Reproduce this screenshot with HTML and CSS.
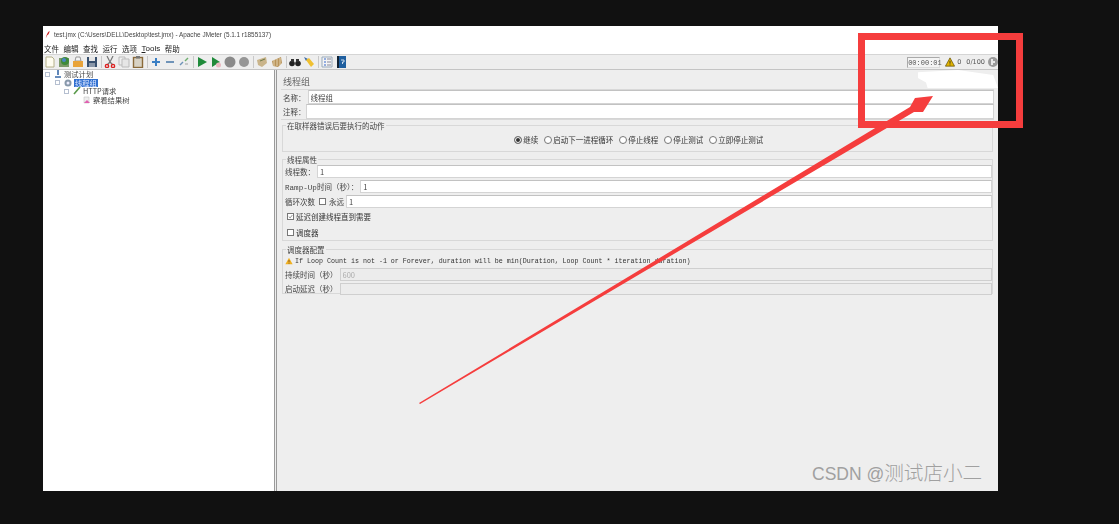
FILE: index.html
```html
<!DOCTYPE html>
<html lang="en">
<head>
    <meta charset="UTF-8">
    <title>test.jmx - Apache JMeter</title>
    <link rel="stylesheet" href="styles.css">
</head>
<body>
    <div class="window">
        <div class="titlebar">
            <svg class="feather" viewBox="0 0 8 10"><path d="M6 0 C3 2 2 6 1 10 L3 6 C5 5 6 3 6 0Z" fill="#c22"/></svg>
            <span>test.jmx (C:\Users\DELL\Desktop\test.jmx) - Apache JMeter (5.1.1 r1855137)</span>
        </div>
        <div class="menubar">
            <span>文件</span><span>编辑</span><span>查找</span><span>运行</span><span>选项</span><span class="latin"><u>T</u>ools</span><span>帮助</span>
        </div>
        <div class="toolbar">
            <svg class="tool" viewBox="0 0 12 12"><path d="M2 1h6l2 2v8H2z" fill="#fffdf0" stroke="#b5b08a"/></svg>
            <svg class="tool" viewBox="0 0 12 12"><rect x="1" y="2" width="10" height="9" fill="#7d9a6a"/><circle cx="7" cy="5" r="4" fill="#3f8a3a"/><circle cx="6" cy="4" r="2" fill="#4a86c5"/></svg>
            <svg class="tool" viewBox="0 0 12 12"><path d="M4 1l4 0 1 4H3z" fill="#f3f3f3" stroke="#999"/><path d="M1 5h10v6H1z" fill="#e8a33a"/></svg>
            <svg class="tool" viewBox="0 0 12 12"><path d="M1 1h10v10H1z" fill="#38506e"/><path d="M3 1h6v4H3z" fill="#e6e6e6"/><path d="M3 7h6v4H3z" fill="#8a97a8"/></svg>
            <i class="sep"></i>
            <svg class="tool" viewBox="0 0 12 12"><path d="M3 0l3 6 3-6M6 6L3 9M6 6l3 3" fill="none" stroke="#777" stroke-width="1.2"/><circle cx="3" cy="10" r="1.6" fill="none" stroke="#d22" stroke-width="1.4"/><circle cx="9" cy="10" r="1.6" fill="none" stroke="#d22" stroke-width="1.4"/></svg>
            <svg class="tool" viewBox="0 0 12 12"><path d="M1 1h6v8H1z" fill="#eee" stroke="#bbb"/><path d="M4 3h7v8H4z" fill="#e6e6e6" stroke="#bbb"/></svg>
            <svg class="tool" viewBox="0 0 12 12"><rect x="1.5" y="1.5" width="9" height="10" fill="#d8d2c4" stroke="#8a6a3a" stroke-width="1.4"/><rect x="4" y="0" width="4" height="2.5" fill="#777"/></svg>
            <i class="sep"></i>
            <svg class="tool" viewBox="0 0 12 12"><path d="M5 2h2v3h3v2H7v3H5V7H2V5h3z" fill="#3b7fc4"/></svg>
            <svg class="tool" viewBox="0 0 12 12"><path d="M2 5h8v2H2z" fill="#6f93b8"/></svg>
            <svg class="tool" viewBox="0 0 12 12"><path d="M2 9l3-3" stroke="#6f93b8" stroke-width="1.5"/><path d="M7 5l3-3" stroke="#6fae6f" stroke-width="1.5"/><path d="M7 8h3" stroke="#bbb" stroke-width="1.5"/></svg>
            <i class="sep"></i>
            <svg class="tool" viewBox="0 0 12 12"><path d="M2 1l9 5-9 5z" fill="#1f8a3a"/></svg>
            <svg class="tool" viewBox="0 0 12 12"><path d="M2 1l8 5-8 5z" fill="#1f8a3a"/><circle cx="8.500" cy="9" r="2.500" fill="#e8b8c0"/></svg>
            <svg class="tool" viewBox="0 0 12 12"><circle cx="6" cy="6" r="5.500" fill="#8a8a8a"/></svg>
            <svg class="tool" viewBox="0 0 12 12"><circle cx="6" cy="6" r="5" fill="#969696"/></svg>
            <i class="sep"></i>
            <svg class="tool" viewBox="0 0 12 12"><path d="M1 4l9-3 1 6-5 4-4-2z" fill="#c9b48a"/><path d="M4 5l5-2" stroke="#6f7a4a"/></svg>
            <svg class="tool wide" viewBox="0 0 12 12"><path d="M1 5l9-4 1 6-4 4-5-1z" fill="#b8935a"/><path d="M3 4v6M6 3v7M9 2v7" stroke="#e4d3b0"/></svg>
            <i class="sep"></i>
            <svg class="tool" viewBox="0 0 12 12"><circle cx="3" cy="7.500" r="2.800" fill="#222"/><circle cx="9" cy="7.500" r="2.800" fill="#222"/><path d="M2 3h3v3H2zM7 3h3v3H7z" fill="#333"/></svg>
            <svg class="tool" viewBox="0 0 12 12"><path d="M1 1l4 2-2 2z" fill="#3a6aa8"/><path d="M3 4l3-2 5 6-3 3z" fill="#f0c030"/></svg>
            <i class="sep"></i>
            <svg class="tool" viewBox="0 0 12 12"><path d="M1 1h10v10H1z" fill="#f4f4f4" stroke="#9ab"/><path d="M3 3h2M3 6h2M3 9h2" stroke="#36c"/><path d="M6 3h4M6 6h4M6 9h4" stroke="#889"/></svg>
            <svg class="tool" viewBox="0 0 12 12"><path d="M2 0h9v12H2z" fill="#1f5f9f"/><path d="M2 0h2v12H2z" fill="#123"/><path d="M6 4h3v2H7.500v2" stroke="#cde" fill="none"/></svg>
            <div class="status">
                <span class="timer">00:00:01</span>
                <svg class="warn-big" viewBox="0 0 12 11"><path d="M6 .5L11.500 10.500H.5z" fill="#e2b400" stroke="#554400" stroke-width=".8"/><path d="M6 4v3.500M6 8.500v1" stroke="#222"/></svg>
                <span>0</span>
                <span class="threads">0/100</span>
                <svg class="globe" viewBox="0 0 10 10"><circle cx="5" cy="5" r="5" fill="#9a9a9a"/><path d="M3 2h2v2h2v2H5v2H3z" fill="#e8e8e8"/></svg>
            </div>
        </div>
        <div class="main">
            <div class="tree">
                <div class="node lvl0"><i class="handle"></i><svg class="node-icon" viewBox="0 0 8 8"><path d="M4 0v5M1 7h6" stroke="#3a6aa8" stroke-width="1.600"/></svg><span>测试计划</span></div>
                <div class="node lvl1"><i class="handle"></i><svg class="node-icon" viewBox="0 0 8 8"><circle cx="4" cy="4" r="3.500" fill="#89a"/><circle cx="4" cy="4" r="1.500" fill="#eef"/></svg><span class="selected">线程组</span></div>
                <div class="node lvl2"><i class="handle"></i><svg class="node-icon" viewBox="0 0 8 8"><path d="M7 0L1 7" stroke="#5a9a4a" stroke-width="1.600"/></svg><span>HTTP请求</span></div>
                <div class="node lvl3"><svg class="node-icon" viewBox="0 0 8 8"><path d="M1 1h5v6H1z" fill="#eee" stroke="#bbb" stroke-width=".5"/><path d="M1 7l3-3 3 3z" fill="#e060b0"/></svg><span>察看结果树</span></div>
            </div>
            <div class="divider"></div>
            <div class="panel">
                <div class="panel-title">线程组</div>
                <div class="name-box">
                    <label class="row name-row">名称：<input value="线程组" readonly></label>
                    <label class="row comment-row">注释：<input readonly></label>
                </div>

                <fieldset class="group error-group">
                    <legend>在取样器错误后要执行的动作</legend>
                    <div class="radios">
                        <span class="radio on">继续</span>
                        <span class="radio">启动下一进程循环</span>
                        <span class="radio">停止线程</span>
                        <span class="radio">停止测试</span>
                        <span class="radio">立即停止测试</span>
                    </div>
                </fieldset>

                <fieldset class="group thread-group">
                    <legend>线程属性</legend>
                    <label class="row field">线程数：<input value="1" readonly></label>
                    <label class="row field"><span><span class="mono ramp">Ramp-Up</span>时间（秒）：</span><input value="1" readonly></label>
                    <label class="row field">循环次数<i class="box"></i>永远<input value="1" readonly></label>
                    <div class="check-row first"><svg class="box" viewBox="0 0 7 7"><path d="M1 3.500l2 2 3-4" fill="none" stroke="#666"/></svg>延迟创建线程直到需要</div>
                    <div class="check-row"><i class="box"></i>调度器</div>
                </fieldset>

                <fieldset class="group sched-group">
                    <legend>调度器配置</legend>
                    <div class="notice">
                        <svg class="warn" viewBox="0 0 12 11"><path d="M6 .5L11.500 10.500H.5z" fill="#f0b020"/><path d="M6 4v3.500M6 8.500v1" stroke="#533"/></svg>
                        <span class="mono">If Loop Count is not -1 or Forever, duration will be min(Duration, Loop Count * iteration duration)</span>
                    </div>
                    <label class="row field off">持续时间（秒）<input value="600" readonly></label>
                    <label class="row field off">启动延迟（秒）<input readonly></label>
                </fieldset>
            </div>
        </div>
    </div>

    <div class="smudge"></div>
    <div class="red-box"></div>
    <svg class="arrow" viewBox="0 0 1119 524"><polygon points="419,403 910,107 915,98 933,96 923,112 914,112 420,404" fill="#f53d3d"/></svg>
    <div class="watermark">CSDN @<span class="watermark-cjk">测试店小二</span></div>
</body>
</html>
```

FILE: styles.css
```css
* {
    box-sizing: border-box;
}

html, body {
    height: 100%;
}

body {
    margin: 0;
    padding: 26px 0 0 43px;
    background-color: #111111;
    overflow: hidden;
    font-family: "Noto Sans CJK SC", "Liberation Sans", sans-serif;
    font-size: 7.5px;
    color: #333;
}

.window {
    width: 955px;
    height: 465px;
    background-color: #fff;
    display: flex;
    flex-direction: column;
    filter: blur(0.45px);
}

.titlebar {
    height: 16px;
    display: flex;
    align-items: center;
    gap: 3px;
    padding-left: 2px;
    font-family: "Liberation Sans", sans-serif;
    font-size: 6.4px;
    color: #444;
}

.feather {
    width: 6px;
    height: 9px;
}

.menubar {
    height: 12px;
    display: flex;
    align-items: center;
    gap: 4.5px;
    padding-left: 1px;
    font-size: 7.5px;
    color: #222;
}

.latin {
    font-family: "Liberation Sans", sans-serif;
    font-size: 8px;
}

.toolbar {
    height: 16px;
    display: flex;
    align-items: center;
    gap: 2px;
    padding-left: 1px;
    background-color: #eeeeee;
    border-top: 1px solid #d5d5d5;
    border-bottom: 1px solid #c4c4c4;
}

.tool {
    width: 12px;
    height: 12px;
    flex: none;
}

.tool.wide {
    margin-left: 1px;
}

.sep {
    width: 1px;
    height: 12px;
    background-color: #c8c8c8;
    margin: 0 0.5px;
    flex: none;
}

.status {
    margin-left: auto;
    display: flex;
    align-items: center;
    gap: 3px;
    font-family: "DejaVu Sans", sans-serif;
    font-size: 6.5px;
    color: #555;
}

.timer {
    width: 33px;
    height: 11px;
    line-height: 10px;
    background-color: #f4f4f4;
    border: 1px solid #aaa;
    border-right-color: #ddd;
    border-bottom-color: #ddd;
    font-family: "Liberation Mono", monospace;
    font-size: 7px;
    text-align: center;
}

.warn-big {
    width: 10px;
    height: 10px;
    margin-left: 2px;
    margin-right: -1px;
}

.threads {
    margin-left: 2px;
}

.globe {
    width: 10px;
    height: 10px;
}

.main {
    flex: 1;
    display: flex;
    min-height: 0;
}

.tree {
    width: 231px;
    background-color: #fff;
    font-size: 7.3px;
    color: #444;
}

.node {
    height: 8.5px;
    line-height: 8px;
    display: flex;
    align-items: center;
    gap: 2px;
    white-space: nowrap;
}

.lvl0 { padding-left: 2px; }
.lvl1 { padding-left: 12px; }
.lvl2 { padding-left: 21px; }
.lvl3 { padding-left: 40px; }

.handle {
    width: 5px;
    height: 5px;
    border: 1px solid #b5bfd0;
    margin-right: 2px;
    flex: none;
}

.node-icon {
    width: 8px;
    height: 8px;
    flex: none;
}

.selected {
    background-color: #2f6fd0;
    color: #dfe8ff;
    padding: 0 1px;
}

.divider {
    width: 3px;
    background-color: #eeeeee;
    border-left: 1px solid #9a9a9a;
    border-right: 1px solid #9a9a9a;
}

.panel {
    flex: 1;
    min-width: 0;
    background-color: #eeeeee;
    padding: 6px 4px 0 4px;
}

.panel-title {
    height: 13px;
    padding-left: 2px;
    font-size: 9px;
    line-height: 12px;
    color: #666;
}

.name-box {
    border-top: 1px solid #d8d8d8;
    border-bottom: 1px solid #d8d8d8;
}

.row {
    display: flex;
    align-items: center;
    white-space: nowrap;
    color: #444;
}

.row input {
    flex: 1;
    min-width: 0;
    height: 100%;
    border: 1px solid #d4d4d4;
    border-top-color: #c2c2c2;
    background-color: #fff;
    padding: 0 2px;
    margin: 0;
    outline: none;
    font-family: "Noto Sans CJK SC", sans-serif;
    font-size: 7.5px;
    color: #444;
}

.name-row {
    height: 14px;
    padding-left: 2px;
}

.name-row input {
    margin-left: 2px;
}

.comment-row {
    height: 15px;
    padding-left: 2px;
}

.group {
    margin: 1px 1px 0 1px;
    padding: 0 0 0 2px;
    min-width: 0;
    border: 1px solid #d8d8d8;
}

.group legend {
    padding: 0 1px;
    margin-left: 1px;
    font-size: 7.5px;
    line-height: 9px;
    color: #444;
}

.error-group {
    height: 31px;
}

.thread-group {
    height: 86px;
    margin-top: 3px;
    padding-top: 1px;
}

.sched-group {
    height: 49px;
    margin-top: 4px;
    padding-top: 2px;
}

.radios {
    display: flex;
    justify-content: center;
    gap: 5.5px;
    padding-top: 4px;
    font-size: 7.5px;
}

.radio {
    display: flex;
    align-items: center;
    gap: 1.5px;
}

.radio::before {
    content: "";
    width: 6px;
    height: 6px;
    border: 1px solid #777;
    border-radius: 50%;
    background-color: #fff;
}

.radio.on::before {
    background-color: #333;
    box-shadow: inset 0 0 0 1px #fff;
}

.field {
    height: 13px;
    margin-bottom: 2px;
    gap: 2px;
}

.mono {
    font-family: "Liberation Mono", monospace;
    font-size: 6.67px;
}

.ramp {
    font-size: 7.6px;
}

.box {
    display: inline-block;
    width: 7px;
    height: 7px;
    border: 1px solid #777;
    background-color: #fff;
    flex: none;
    margin: 0 1px 0 2px;
}

.check-row {
    height: 16px;
    display: flex;
    align-items: center;
    gap: 1px;
}

.check-row.first {
    margin-top: -2px;
}

.notice {
    height: 10px;
    display: flex;
    align-items: center;
    gap: 2px;
    margin-bottom: 2px;
}

.warn {
    width: 8px;
    height: 8px;
    flex: none;
}

.off input {
    background-color: #ececec;
    border-color: #cfcfcf;
    color: #aaa;
}

.off {
    height: 12.5px;
    margin-bottom: 2px;
}

.smudge {
    position: absolute;
    left: 918px;
    top: 70px;
    width: 80px;
    height: 18px;
    background-color: #fff;
    clip-path: polygon(0 12%, 50% 0, 94% 28%, 100% 100%, 12% 100%, 10% 70%, 0 45%);
}

.red-box {
    position: absolute;
    left: 858px;
    top: 33px;
    width: 165px;
    height: 95px;
    border: 7px solid #f53d3d;
}

.arrow {
    position: absolute;
    left: 0;
    top: 0;
    width: 1119px;
    height: 524px;
}

.watermark {
    position: absolute;
    left: 812px;
    top: 459px;
    font-family: "Liberation Sans", sans-serif;
    font-size: 17.5px;
    line-height: 26px;
    white-space: nowrap;
    color: #a0a0a0;
}

.watermark-cjk {
    font-family: "Noto Sans CJK SC", sans-serif;
    font-size: 19.6px;
    font-weight: 300;
}
```
